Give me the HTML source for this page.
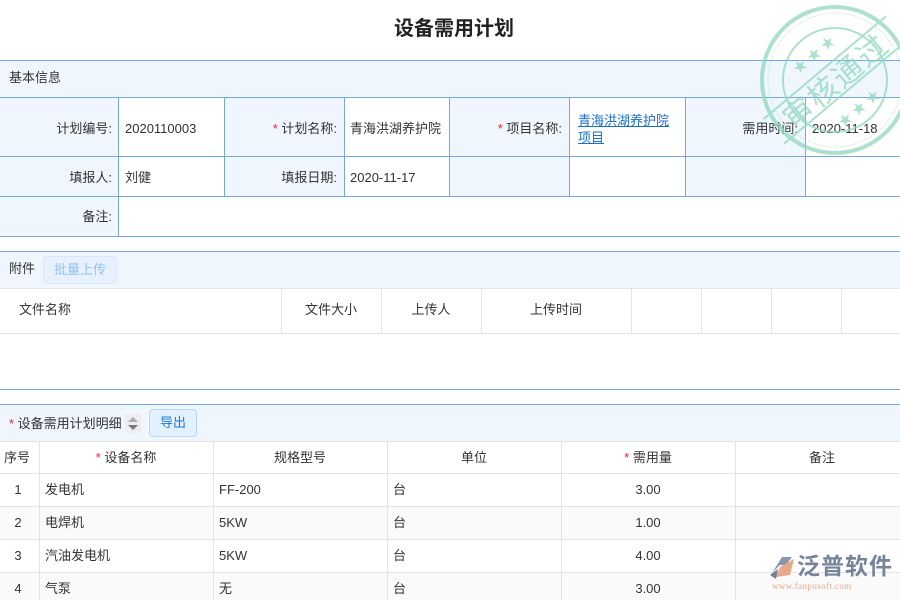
<!DOCTYPE html>
<html><head><meta charset="utf-8"><style>
*{box-sizing:border-box;margin:0;padding:0}
body{width:900px;height:600px;overflow:hidden;background:#fff;font-family:"Liberation Sans","Noto Sans CJK SC",sans-serif;font-size:13px;color:#333;position:relative}
.abs{position:absolute}
.hl{position:absolute;left:0;width:900px;height:1px;background:#74a9da}
.gl{position:absolute;height:1px;background:#e4e4e4}
.vl{position:absolute;width:1px;background:#74a9da}
.gv{position:absolute;width:1px;background:#e4e4e4}
.t{position:absolute;white-space:nowrap;line-height:16px}
.r{color:#f5222d}
</style></head><body>
<div class="t" style="left:0;width:908px;text-align:center;top:18px;font-size:20px;line-height:22px;font-weight:bold;color:#222">设备需用计划</div>

<div class="abs" style="left:0;top:60px;width:900px;height:37px;background:#eff6fe"></div>
<div class="abs" style="left:0;top:97px;width:118px;height:139px;background:#eff6fe"></div>
<div class="abs" style="left:224px;top:97px;width:120px;height:99px;background:#eff6fe"></div>
<div class="abs" style="left:449px;top:97px;width:120px;height:99px;background:#eff6fe"></div>
<div class="abs" style="left:685px;top:97px;width:120px;height:99px;background:#eff6fe"></div>
<div class="hl" style="top:60px"></div><div class="hl" style="top:97px"></div><div class="hl" style="top:156px"></div><div class="hl" style="top:196px"></div><div class="hl" style="top:236px"></div>
<div class="vl" style="left:118px;top:97px;height:139px"></div>
<div class="vl" style="left:224px;top:97px;height:99px"></div>
<div class="vl" style="left:344px;top:97px;height:99px"></div>
<div class="vl" style="left:449px;top:97px;height:99px"></div>
<div class="vl" style="left:569px;top:97px;height:99px"></div>
<div class="vl" style="left:685px;top:97px;height:99px"></div>
<div class="vl" style="left:805px;top:97px;height:99px"></div>
<div class="t" style="left:9px;top:70px">基本信息</div>
<div class="t" style="left:0;width:112px;text-align:right;top:121px">计划编号:</div>
<div class="t" style="left:125px;top:121px">2020110003</div>
<div class="t" style="left:224px;width:113px;text-align:right;top:121px"><span class="r">*</span> 计划名称:</div>
<div class="t" style="left:350px;top:121px">青海洪湖养护院</div>
<div class="t" style="left:449px;width:113px;text-align:right;top:121px"><span class="r">*</span> 项目名称:</div>
<div class="t" style="left:578px;top:112px;color:#1a6fc9;text-decoration:underline;line-height:17px;white-space:normal;width:100px">青海洪湖养护院<br>项目</div>
<div class="t" style="left:685px;width:113px;text-align:right;top:121px">需用时间:</div>
<div class="t" style="left:812px;top:121px">2020-11-18</div>
<div class="t" style="left:0;width:112px;text-align:right;top:170px">填报人:</div>
<div class="t" style="left:125px;top:170px">刘健</div>
<div class="t" style="left:224px;width:113px;text-align:right;top:170px">填报日期:</div>
<div class="t" style="left:350px;top:170px">2020-11-17</div>
<div class="t" style="left:0;width:112px;text-align:right;top:209px">备注:</div>

<div class="abs" style="left:0;top:251px;width:900px;height:37px;background:#eff6fe"></div>
<div class="hl" style="top:251px"></div>
<div class="gl" style="left:0;width:900px;top:288px"></div>
<div class="gl" style="left:0;width:900px;top:333px"></div>
<div class="gv" style="left:281px;top:288px;height:45px"></div>
<div class="gv" style="left:381px;top:288px;height:45px"></div>
<div class="gv" style="left:481px;top:288px;height:45px"></div>
<div class="gv" style="left:631px;top:288px;height:45px"></div>
<div class="gv" style="left:701px;top:288px;height:45px"></div>
<div class="gv" style="left:771px;top:288px;height:45px"></div>
<div class="gv" style="left:841px;top:288px;height:45px"></div>
<div class="t" style="left:9px;top:261px">附件</div>
<div class="abs" style="left:43px;top:256px;width:74px;height:28px;border:1px solid #d6e8fa;background:#e6f1fd;border-radius:4px;color:#94c2ee;text-align:center;line-height:26px">批量上传</div>
<div class="t" style="left:19px;top:302px">文件名称</div>
<div class="t" style="left:281px;width:100px;text-align:center;top:302px">文件大小</div>
<div class="t" style="left:381px;width:100px;text-align:center;top:302px">上传人</div>
<div class="t" style="left:481px;width:150px;text-align:center;top:302px">上传时间</div>
<div class="hl" style="top:389px"></div>

<div class="abs" style="left:0;top:404px;width:900px;height:37px;background:#eff6fe"></div>
<div class="hl" style="top:404px"></div>
<div class="gl" style="left:0;width:900px;top:441px"></div>
<div class="t" style="left:9px;top:416px"><span class="r">*</span> 设备需用计划明细</div>
<div class="abs" style="left:125px;top:414px;width:16px;height:19px;background:#eee"></div>
<div class="abs" style="left:128px;top:417px;width:0;height:0;border-left:5px solid transparent;border-right:5px solid transparent;border-bottom:5px solid #aaa"></div>
<div class="abs" style="left:128px;top:425px;width:0;height:0;border-left:5px solid transparent;border-right:5px solid transparent;border-top:5px solid #777"></div>
<div class="abs" style="left:149px;top:409px;width:48px;height:28px;border:1px solid #b9d8f6;background:#e3f0fd;border-radius:4px;color:#1a7ad6;text-align:center;line-height:26px">导出</div>

<div class="abs" style="left:0;top:506px;width:900px;height:33px;background:#fafafa"></div>
<div class="abs" style="left:0;top:572px;width:900px;height:28px;background:#fafafa"></div>
<div class="gl" style="left:0;width:900px;top:473px"></div>
<div class="gl" style="left:0;width:900px;top:506px"></div>
<div class="gl" style="left:0;width:900px;top:539px"></div>
<div class="gl" style="left:0;width:900px;top:572px"></div>
<div class="gv" style="left:39px;top:441px;height:159px"></div>
<div class="gv" style="left:213px;top:441px;height:159px"></div>
<div class="gv" style="left:387px;top:441px;height:159px"></div>
<div class="gv" style="left:561px;top:441px;height:159px"></div>
<div class="gv" style="left:735px;top:441px;height:159px"></div>
<div class="t" style="left:4px;top:450px">序号</div>
<div class="t" style="left:39px;width:174px;text-align:center;top:450px"><span class="r">*</span> 设备名称</div>
<div class="t" style="left:213px;width:174px;text-align:center;top:450px">规格型号</div>
<div class="t" style="left:387px;width:174px;text-align:center;top:450px">单位</div>
<div class="t" style="left:561px;width:174px;text-align:center;top:450px"><span class="r">*</span> 需用量</div>
<div class="t" style="left:735px;width:174px;text-align:center;top:450px">备注</div>

<div class="t" style="left:0;width:36px;text-align:center;top:482px">1</div><div class="t" style="left:45px;top:482px">发电机</div><div class="t" style="left:219px;top:482px">FF-200</div><div class="t" style="left:393px;top:482px">台</div><div class="t" style="left:561px;width:174px;text-align:center;top:482px">3.00</div>
<div class="t" style="left:0;width:36px;text-align:center;top:515px">2</div><div class="t" style="left:45px;top:515px">电焊机</div><div class="t" style="left:219px;top:515px">5KW</div><div class="t" style="left:393px;top:515px">台</div><div class="t" style="left:561px;width:174px;text-align:center;top:515px">1.00</div>
<div class="t" style="left:0;width:36px;text-align:center;top:548px">3</div><div class="t" style="left:45px;top:548px">汽油发电机</div><div class="t" style="left:219px;top:548px">5KW</div><div class="t" style="left:393px;top:548px">台</div><div class="t" style="left:561px;width:174px;text-align:center;top:548px">4.00</div>
<div class="t" style="left:0;width:36px;text-align:center;top:581px">4</div><div class="t" style="left:45px;top:581px">气泵</div><div class="t" style="left:219px;top:581px">无</div><div class="t" style="left:393px;top:581px">台</div><div class="t" style="left:561px;width:174px;text-align:center;top:581px">3.00</div>

<svg class="abs" style="left:755px;top:0" width="160" height="160" viewBox="0 0 160 160" opacity="0.75">
<g fill="none" stroke="#8fd8bd">
<circle cx="80" cy="80" r="73" stroke-width="4"/>
<circle cx="80" cy="80" r="67" stroke-width="1" stroke-dasharray="1 2"/>
<circle cx="80" cy="80" r="52" stroke-width="2"/>
</g>
<g transform="rotate(-40 80 80)">
<line x1="0" y1="64" x2="160" y2="64" stroke="#8fd8bd" stroke-width="2"/>
<line x1="0" y1="96" x2="160" y2="96" stroke="#8fd8bd" stroke-width="2"/>
<text x="80" y="92" text-anchor="middle" font-size="30" fill="#8fd8bd" font-family="'Noto Sans CJK SC',sans-serif" letter-spacing="2">审核通过</text>
<text x="80" y="52" text-anchor="middle" font-size="14" fill="#8fd8bd">★ ★ ★</text>
<text x="80" y="122" text-anchor="middle" font-size="14" fill="#8fd8bd">★ ★ ★</text>
</g>
</svg>

<svg class="abs" style="left:768px;top:553px" width="30" height="28" viewBox="0 0 30 28">
<path d="M4 20 L14 4 L24 4 L18 12 L12 12 Z" fill="#8a97ad"/>
<path d="M12 14 L26 6 L22 22 L8 24 Z" fill="#e8a98a"/>
<path d="M2 22 L10 16 L8 26 Z" fill="#6f7f99"/>
</svg>
<div class="t" style="left:797px;top:553px;font-size:23px;line-height:26px;color:#76839a;font-weight:bold;letter-spacing:1px">泛普软件</div>
<div class="t" style="left:772px;top:581px;font-size:9px;line-height:10px;color:#e8a98a;font-family:'Liberation Serif',serif;letter-spacing:0.4px">www.fanpusoft.com</div>
</body></html>
